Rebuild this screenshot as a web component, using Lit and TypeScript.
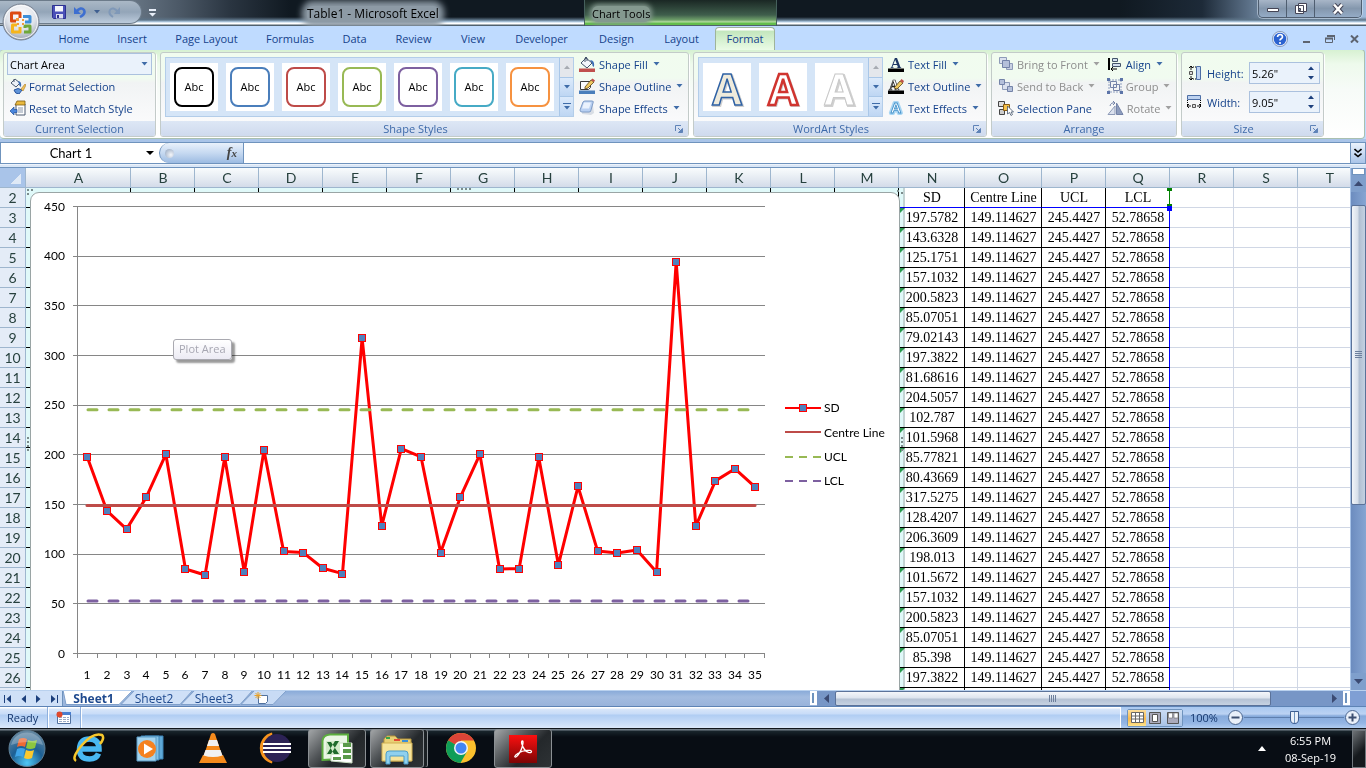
import { LitElement, html, svg, css, nothing } from "lit";
import { customElement } from "lit/decorators.js";
import { classMap } from "lit/directives/class-map.js";

const SD = [
  197.5782, 143.6328, 125.1751, 157.1032, 200.5823, 85.07051, 79.02143, 197.3822, 81.68616,
  204.5057, 102.787, 101.5968, 85.77821, 80.43669, 317.5275, 128.4207, 206.3609, 198.013,
  101.5672, 157.1032, 200.5823, 85.07051, 85.398, 197.3822, 89.3, 168.2, 103.1, 101.2, 104.1,
  82, 394.6, 128.3, 173.8, 185.9, 168.1,
];
const CENTRE = 149.114627;
const UCL = 245.4427;
const LCL = 52.78658;

const baseStyles = css`
  :host { box-sizing: border-box; flex: none; }
  * { box-sizing: border-box; }
  button, input, select {
    font: inherit; color: inherit; margin: 0; padding: 0; border: 0; background: none; outline: 0; border-radius: 0;
  }
  button { cursor: default; white-space: nowrap; }
  svg { display: block; flex: none; }
`;

/* ---------- icons ---------- */
const icon = (w: number, h: number, body: unknown) =>
  html`<svg width=${w} height=${h} viewBox="0 0 ${w} ${h}" aria-hidden="true">${body}</svg>`;

const caret = (c = "#3f6ca8") => icon(7, 4, svg`<path d="M0.5 0h6L3.5 3.6z" fill=${c} />`);

const bucket = svg`
  <path d="M2 7l5-5 6 5-5 5z" fill="#f4f7fb" stroke="#44546a" />
  <path d="M6 6V2q1-2 2 0v3" fill="none" stroke="#44546a" />
  <path d="M11 4q5 0 4 7-2-1-2-4z" fill="#3b6cb4" />`;

const icons = {
  formatSel: icon(16, 16, svg`
    <path d="M1 5l4-4 5 4-4 4z" fill="#eef2f8" stroke="#4c5a70" />
    <path d="M4 4V1" stroke="#4c5a70" /><path d="M8 3q4 0 3 6-2-1-2-3z" fill="#3b6cb4" />
    <path d="M4 12q4-3 8 0l-3 4q-4 0-5-4z" fill="#5f93d8" stroke="#2c569c" />
    <path d="M11 11l4-5 1 1-3 6z" fill="#f0c15a" stroke="#a87820" stroke-width=".6" />`),
  reset: icon(16, 16, svg`
    <path d="M6 4h9v11H6z" fill="#fff" stroke="#4c5a70" />
    <path d="M7 1h8v4H5z" fill="#e9b93e" stroke="#7c5b12" stroke-width=".8" />
    <path d="M8 8h5M8 10h5M8 12h5" stroke="#8a97aa" />
    <path d="M0 11l4-4v2.500h3v3H4V15z" fill="#4a86dc" stroke="#1f4f9c" stroke-width=".7" />`),
  fill: icon(17, 16, svg`${bucket}<path d="M0 12.500h16v3.500H0z" fill="#c0504d" />`),
  outline: icon(17, 16, svg`
    <path d="M1.500 3.500h10v6l-2 2h-8z" fill="#fbfcfe" stroke="#3b3b3b" />
    <path d="M6 9l6-7 3 2-6 6-3 1z" fill="#efc860" stroke="#5b4316" stroke-width=".8" />
    <path d="M12 2l1.500-1.500 2.500 2L15 4z" fill="#c05048" />
    <path d="M0 12.500h16v3.500H0z" fill="#4a7ebb" />`),
  effects: icon(17, 16, svg`
    <path d="M4 5l10 1 1 7-3 2-9-1z" fill="#b9c2cf" opacity=".5" />
    <path d="M4 2q1-1 2-1h7q2 0 1 2l-2 7q0 2-2 2H3q-2 0-2-2z" fill="#b9d0f2" stroke="#7f9cc6" />
    <path d="M5 2.500h7l-2 6H3z" fill="#eaf2fd" />`),
  textFill: icon(17, 16, svg`
    <text x="8" y="12" text-anchor="middle" font-family="Liberation Serif, serif" font-size="15" font-weight="700" fill="#1f3864">A</text>
    <path d="M0 12.500h16v3.500H0z" fill="#000" />`),
  textOutline: icon(17, 16, svg`
    <text x="6" y="12" text-anchor="middle" font-family="Liberation Serif, serif" font-size="14" font-weight="700" fill="#fff" stroke="#222" stroke-width=".7">A</text>
    <path d="M6 10l6-7 3 2-6 6z" fill="#efc860" stroke="#5b4316" stroke-width=".8" />
    <path d="M12 3l1.500-2 2.500 2L15 5z" fill="#c05048" />
    <path d="M0 12.500h16v3.500H0z" fill="#000" />`),
  textEffects: icon(17, 16, svg`
    <text x="8" y="13" text-anchor="middle" font-family="Liberation Sans, sans-serif" font-size="15" font-weight="700" fill="#fff" stroke="#a9d6f3" stroke-width="4" stroke-linejoin="round">A</text>
    <text x="8" y="13" text-anchor="middle" font-family="Liberation Sans, sans-serif" font-size="15" font-weight="700" fill="#fff" stroke="#3f8fc9" stroke-width=".8">A</text>`),
  front: icon(16, 16, svg`
    <path d="M1.500 1.500h7v6h-7z" fill="#dbe1ee" stroke="#8e9bb8" /><path d="M8.500 7.500h6v6h-6z" fill="#c9d1e2" stroke="#8e9bb8" />
    <path d="M4.500 4.500h7v7h-7z" fill="#b5c0da" stroke="#7483a8" />`),
  back: icon(16, 16, svg`
    <path d="M4.500 4.500h7v7h-7z" fill="#dbe1ee" stroke="#8e9bb8" /><path d="M1.500 1.500h5v5h-5z" fill="#b5c0da" stroke="#7483a8" />
    <path d="M9.500 8.500h5v5h-5z" fill="#b5c0da" stroke="#7483a8" />`),
  pane: icon(16, 16, svg`
    <path d="M.5 1.500h6v5h-6z" fill="#ddd" stroke="#444" /><path d="M1.500 9.500h5v5h-5z" fill="#ccc" stroke="#444" />
    <path d="M5.500 4.500h6v6h-6z" fill="#f6c24a" stroke="#8a5a10" />
    <path d="M9.500 6v8l2-1.500 1.500 3 1.500-1-1.500-2.500h2.500z" fill="#fff" stroke="#44546a" stroke-width=".8" />`),
  align: icon(16, 16, svg`
    <path d="M2 2v12" stroke="#000" stroke-width="2" /><path d="M5.500 2.500h5v3h-5zM5.500 7.500h8v3h-8z" fill="#d5e0f0" stroke="#44546a" />
    <path d="M4 13h6M6 11l-2 2 2 2" fill="none" stroke="#000" />`),
  group: icon(16, 16, svg`
    <path d="M2 2h12v12H2z" fill="none" stroke="#8fa0c0" stroke-dasharray="2 1" />
    <path d="M3.500 3.500h6v6h-6zM6.500 6.500h6v6h-6z" fill="none" stroke="#7483a8" />
    <path d="M0 0h3v3H0zM13 0h3v3h-3zM0 13h3v3H0zM13 13h3v3h-3z" fill="#5c74a8" />`),
  rotate: icon(17, 16, svg`
    <path d="M1 14.500h7V6z" fill="#dbe1ee" stroke="#8e9bb8" /><path d="M9.500 3v11.500H16z" fill="#8d9cbd" stroke="#7483a8" />
    <path d="M3 6q1-4 5-3M6 1l2 2-2 2" fill="none" stroke="#7483a8" />`),
  height: icon(15, 16, svg`
    <path d="M9.500 1.500h4v13h-4z" fill="#bdd2f0" stroke="#4c6ea5" /><path d="M4 2h5M4 14h5" stroke="#000" stroke-dasharray="1 1" />
    <path d="M2.500 6.500h3v3h-3z" fill="#ddd" stroke="#555" /><path d="M4 1v4M4 11v4M2 3l2-2 2 2M2 13l2 2 2-2" fill="none" stroke="#000" stroke-width=".9" />`),
  width: icon(15, 16, svg`
    <path d="M.5 1.500h13v4H.5z" fill="#bdd2f0" stroke="#4c6ea5" /><path d="M.5 6v5M13.500 6v5" stroke="#000" stroke-dasharray="1 1" />
    <path d="M5.500 10.500h3v3h-3z" fill="#ddd" stroke="#555" /><path d="M0 12h4M10 12h4M2 10l-2 2 2 2M12 10l2 2-2 2" fill="none" stroke="#000" stroke-width=".9" />`),
  launcher: icon(8, 8, svg`
    <path d="M.5 6V.5H6" fill="none" stroke="#5f83b8" /><path d="M3 3l3 3M7.500 3.500v4h-4z" fill="#5f83b8" stroke="#5f83b8" />`),
  office: icon(38, 38, svg`
    <defs><radialGradient id="orb" cx=".5" cy=".3" r=".75"><stop offset="0" stop-color="#fff" /><stop offset=".55" stop-color="#dfe3ea" /><stop offset="1" stop-color="#8f98a8" /></radialGradient></defs>
    <circle cx="19" cy="19" r="18" fill="url(#orb)" stroke="#76808f" /><circle cx="19" cy="19" r="16.500" fill="none" stroke="#fff" opacity=".8" />
    <g fill="none" stroke-width="3" stroke-linejoin="round">
      <path d="M14 18H9.500V10H18v5" stroke="#dd4b12" /><path d="M21 13.500h7V19h-5" stroke="#3d8fd9" />
      <path d="M15 22h-4.500v7h7.500v-5" stroke="#f6b51c" /><path d="M22 29h6v-6h-5v2" stroke="#6fa83a" /></g>
    <path d="M14 15h3v3h-3zM20 16h2v2h-2zM15 20h2v2h-2zM20 20h2v2h-2z" fill="#f29a3a" />`),
  save: icon(14, 14, svg`
    <path d="M.5.5h13v13h-12l-1-1z" fill="#4a50b8" stroke="#2d3190" /><path d="M3 1h8v5.500H3z" fill="#f3f5fb" />
    <path d="M4 9h7v4.500H4z" fill="#d8dcf0" /><path d="M5 10h2v3H5z" fill="#2d3190" />`),
  undo: icon(14, 12, svg`<path d="M3 6q5-6 8-2 2 4-4 7" fill="none" stroke="#3e6fd0" stroke-width="2.500" /><path d="M1 1v7h7z" fill="#3e6fd0" />`),
  redo: icon(14, 12, svg`<path d="M11 6Q6 0 3 4q-2 4 3 7" fill="none" stroke="#7f98b8" stroke-width="2" /><path d="M13 1v7H7z" fill="#7f98b8" />`),
  help: icon(16, 16, svg`
    <circle cx="8" cy="8" r="7" fill="#2b62d0" stroke="#dfe9fb" stroke-width="1.500" /><circle cx="8" cy="8" r="7.600" fill="none" stroke="#5a6f92" stroke-width=".6" />
    <path d="M5.500 6q.3-2.500 2.600-2.500T10.500 6q0 1-1.300 1.700T8 9.500" fill="none" stroke="#fff" stroke-width="1.600" /><circle cx="8" cy="12" r="1.100" fill="#fff" />`),
};

/* ---------- title bar and tabs ---------- */
@customElement("title-bar")
class TitleBar extends LitElement {
  static styles = [baseStyles, css`
    :host { display: grid; grid-template-columns: 584px 193px 1fr auto; height: 26px; position: relative;
      background:
        linear-gradient(to bottom, transparent 0 17px, #5d7488 20px, #b8d2ea 22px, #fff 23px, #fff 24px, #50616f 25px),
        linear-gradient(to right, #8b9bab 0, #7a8998 100px, #4b5866 180px, #2a3541 230px, #101921 290px, #101921 82%, #1d2a38 88%, #8ba6c4 94%, #9fbbdc 100%); }
    .title { display: flex; position: relative; }
    .qat { display: flex; align-items: center; gap: 7px; width: 142px; height: 24px; padding: 0 12px 0 52px;
      border: 1px solid #6c7b8a; border-left: 0; border-radius: 0 12px 12px 0; background: linear-gradient(#aab8c6, #93a5b8 50%, #bccbdc); }
    .qat button { display: grid; place-items: center; }
    .more { margin-left: 7px; }
    .name, .ctx span { height: 16px; line-height: 16px; white-space: nowrap; border-radius: 6px; }
    .name { margin: 6px 0 0 151px; font-size: 12px; color: #000; background: #8d9aa5; box-shadow: 0 0 6px 5px #8d9aa5; }
    .ctx { display: flex; align-items: flex-start; border: solid #45605c; border-width: 0 1px; background: linear-gradient(#1a2724, #3f5e4c 15px, #6fa06a 20px, #b8e0a4 22px, #63bd4c 23px, #63bd4c 25px, #50616f 25px);
      padding: 6px 0 0 7px; }
    .ctx span { font-size: 11px; background: #84998f; box-shadow: 0 0 5px 2px #84998f; }
    .win { grid-column: 4; display: flex; height: 18px; margin-right: 4px; border: 1px solid #4f5e70; border-top: 0; border-radius: 0 0 5px 5px; overflow: hidden;
      box-shadow: 0 0 0 1px rgba(220,232,246,.5); }
    .win button { width: 28px; display: grid; place-items: center; background: linear-gradient(#a8b6c8, #8497ad 50%, #94abc6); border-right: 1px solid #4f5e70; }
    .win .close { width: 46px; border-right: 0; }
  `];
  render() {
    const glyph = (b: unknown) => icon(14, 12, b);
    return html`
      <div class="title">
        <div class="qat">
          <button aria-label="Save">${icons.save}</button>
          <button aria-label="Undo">${icons.undo}</button>
          <button aria-label="Undo list">${icon(6, 4, svg`<path d="M0 0h6L3 3.500z" fill="#3f5f90" />`)}</button>
          <button aria-label="Redo">${icons.redo}</button>
        </div>
        <button class="more" aria-label="Customize toolbar">${icon(7, 8, svg`<path d="M0 0h7v2H0zM0 4h7L3.500 7.500z" fill="#e8eef8" />`)}</button>
        <span class="name">Table1 - Microsoft Excel</span>
      </div>
      <div class="ctx"><span>Chart Tools</span></div>
      <div class="win">
        <button aria-label="Minimize">${glyph(svg`<path d="M1.500 5.500h11v3h-11z" fill="#fff" stroke="#445" />`)}</button>
        <button aria-label="Restore">${glyph(svg`<path d="M4.500.500h8v8h-8zM1.500 2.500h8v8h-8z" fill="#fff" stroke="#445" /><path d="M4.500 5.500h2v2h-2z" fill="#8497ad" stroke="#445" />`)}</button>
        <button class="close" aria-label="Close">${glyph(svg`<path d="M3 1.500l8 9M11 1.500l-8 9" stroke="#445" stroke-width="4.500" /><path d="M3 1.500l8 9M11 1.500l-8 9" stroke="#fff" stroke-width="2.500" />`)}</button>
      </div>`;
  }
}

@customElement("ribbon-tabs")
class RibbonTabs extends LitElement {
  static styles = [baseStyles, css`
    :host { display: grid; grid-template-columns: 58px 58px 91px 76px 53px 65px 54px 83px 67px 63px 64px 1fr auto; height: 24px; padding: 1px 0 0 45px;
      background: #bfdbff; color: #15428b; font-size: 11px; position: relative; z-index: 1; margin-bottom: -1px; }
    .orb { position: absolute; left: 2px; top: -23px; }
    .tab { grid-row: 1; line-height: 24px; text-align: center; }
    .on { height: 23px; margin: 0 2px; line-height: 22px; border: 1px solid #9fb49a; border-bottom: 0; border-radius: 4px 4px 0 0;
      background: linear-gradient(#fff 0 2px, #c3e6bd 3px, #d8f2d3 60%, #eafbe6); }
    .end { grid-row: 1; grid-column: -2; display: flex; align-items: center; gap: 12px; padding-right: 6px; }
    .end button { width: 12px; display: grid; place-items: center; }
    .end .help { width: 16px; }
  `];
  render() {
    const tabs = ["Home", "Insert", "Page Layout", "Formulas", "Data", "Review", "View", "Developer", "Design", "Layout", "Format"];
    return html`
      <button class="orb" aria-label="Office menu">${icons.office}</button>
      ${tabs.map((t) => html`<button class=${classMap({ tab: true, on: t === "Format" })}>${t}</button>`)}
      <div class="end">
        <button class="help" aria-label="Help">${icons.help}</button>
        <button aria-label="Minimize workbook">${icon(8, 8, svg`<path d="M1 6h7v2H1z" fill="#5d6470" />`)}</button>
        <button aria-label="Restore workbook">${icon(10, 8, svg`<path d="M2.500 1h7v4M.500 3.500h7v4h-7z" fill="none" stroke="#5d6470" /><path d="M2 0h8v2H2zM0 2.500h8v2H0z" fill="#5d6470" />`)}</button>
        <button aria-label="Close workbook">${icon(9, 8, svg`<path d="M1 .5l7 7M8 .5l-7 7" stroke="#5d6470" stroke-width="2" />`)}</button>
      </div>`;
  }
}

/* ---------- ribbon ---------- */
@customElement("format-ribbon")
class FormatRibbon extends LitElement {
  static styles = [baseStyles, css`
    :host { display: flex; gap: 4px; height: 90px; padding: 2px 3px; border: 1px solid #a9c0b0; border-left: 0; border-radius: 4px; margin-right: 1px;
      background: linear-gradient(#d7f1d2, #eefaec 14px, #f7fbf8 40px, #fff); font-size: 11px; color: #15428b; }
    .group { display: flex; flex-direction: column; height: 85px; border: 1px solid #c3cbc9; border-radius: 3px; overflow: hidden;
      background: linear-gradient(#f1fcef, #f1fbf0 25px, #f1f3f4 30px, #fdfdfe); box-shadow: 1px 1px 0 #fff; }
    .body { flex: 1; display: flex; min-height: 0; }
    .cap { display: flex; height: 15px; line-height: 15px; color: #3e6aaa; background: linear-gradient(#dde7f5, #cfdaee); }
    .cap span { flex: 1; text-align: center; }
    .launch { width: 18px; display: grid; place-items: center; }
    .selection { width: 153px; }
    .shapes { width: 529px; }
    .wordart { width: 294px; }
    .arrange { width: 186px; }
    .size { width: 143px; }
    .rows { display: flex; flex-direction: column; }
    .cmd { display: flex; align-items: center; gap: 3px; height: 22px; color: #15428b; }
    .cmd svg + .txt { margin-right: 2px; }
    .off { color: #8d8d8d; }
    .selection .rows { padding: 0 3px; width: 100%; }
    .selection .cmd { padding-left: 3px; }
    .pick { appearance: none; height: 22px; width: 145px; padding-left: 2px; border: 1px solid #abc1de; color: #000; background: #eaf2fb; }
    .pickbox { position: relative; display: flex; }
    .pickbox svg { position: absolute; right: 4px; top: 9px; }
    .gallery { display: flex; height: 60px; margin: 4px 5px 0 4px; border: 1px solid #b3cde9; background: #d5e5f7; }
    .tiles { display: flex; gap: 8px; padding: 5px 4px; }
    .tile { width: 48px; height: 48px; background: #fff; display: grid; place-items: center; color: #000; font-size: 11px; }
    .tile svg { overflow: visible; }
    .tile span { width: 40px; height: 40px; line-height: 36px; border: 2px solid #000; border-radius: 8px; text-align: center; }
    .tile .k1 { border-color: #4a7ebb; } .tile .k2 { border-color: #be4b48; } .tile .k3 { border-color: #98b954; }
    .tile .k4 { border-color: #7d60a0; } .tile .k5 { border-color: #46aac5; } .tile .k6 { border-color: #f69240; }
    .scroll { display: flex; flex-direction: column; width: 14px; margin-left: 1px; border-left: 1px solid #a9c7e8; }
    .scroll button { flex: 1; display: grid; place-items: center; background: linear-gradient(#dceafb, #bed6f3); border-bottom: 1px solid #a9c7e8; }
    .scroll button:first-child { background: #e4e7ec; }
    .scroll button:last-child { border: 0; }
    .arrange .body { padding-left: 6px; gap: 7px; }
    .size .body { flex-direction: column; gap: 7px; padding: 9px 3px 0 5px; }
    .field { display: flex; align-items: center; height: 22px; }
    .field label { margin-left: 5px; width: 41px; }
    .spin { display: flex; flex: 1; border: 1px solid #abc1de; background: #eaf2fb; height: 22px; margin-left: 1px; }
    .spin input { width: 50px; padding-left: 2px; color: #000; }
    .spin div { display: flex; flex-direction: column; margin-left: auto; width: 17px; }
    .spin button { flex: 1; display: grid; place-items: center; }
  `];
  cmd(ic: unknown, text: string, arrow = false, off = false) {
    return html`<button class=${classMap({ cmd: true, off })}>${ic}<span class="txt">${text}</span>${arrow ? caret(off ? "#a0a0a0" : "#3f6ca8") : nothing}</button>`;
  }
  scroller() {
    return html`<div class="scroll">
      <button aria-label="Previous row">${icon(6, 4, svg`<path d="M0 4h6L3 .5z" fill="#a7abb2" />`)}</button>
      <button aria-label="Next row">${icon(6, 4, svg`<path d="M0 0h6L3 3.500z" fill="#3f6ca8" />`)}</button>
      <button aria-label="More styles">${icon(8, 8, svg`<path d="M0 0h8v1H0zM1 3h6L4 6.500z" fill="#3f6ca8" />`)}</button>
    </div>`;
  }
  letter(kind: number) {
    const fills = ["#efebdc", "#fff", "#fff"], strokes = ["#2f62a5", "#d0342f", "#c8c8c8"], ws = [1.5, 2.5, 1];
    return html`<button class="tile" aria-label="Text style ${kind + 1}"><svg width="48" height="48" viewBox="0 0 48 48">
      <g font-family="Open Sans, sans-serif" font-size="43" font-weight="700" text-anchor="middle">
        <text x="25" y="43" fill="#999" opacity=".55" stroke="#aaa" stroke-width="2">A</text>
        <text x="24" y="42" fill=${fills[kind]} stroke=${strokes[kind]} stroke-width=${ws[kind]}>A</text></g></svg></button>`;
  }
  render() {
    const launch = html`<button class="launch" aria-label="More options">${icons.launcher}</button>`;
    const cap = (text: string, more: boolean) => html`<div class="cap"><span>${text}</span>${more ? launch : nothing}</div>`;
    const field = (id: string, label: string, value: string, ic: unknown) => html`<div class="field">${ic}<label for=${id}>${label}</label>
      <span class="spin"><input id=${id} .value=${value} /><div>
        <button aria-label="Increase">${icon(6, 4, svg`<path d="M0 4h6L3 .5z" fill="#1c3f7c" />`)}</button>
        <button aria-label="Decrease">${icon(6, 4, svg`<path d="M0 0h6L3 3.500z" fill="#1c3f7c" />`)}</button></div></span></div>`;
    return html`
      <section class="group selection"><div class="body"><div class="rows">
        <div class="pickbox"><select class="pick" aria-label="Chart element"><option>Chart Area</option></select>${caret()}</div>
        ${this.cmd(icons.formatSel, "Format Selection")}${this.cmd(icons.reset, "Reset to Match Style")}
      </div></div>${cap("Current Selection", false)}</section>
      <section class="group shapes"><div class="body">
        <div class="gallery"><div class="tiles">${[0, 1, 2, 3, 4, 5, 6].map((k) => html`<button class="tile"><span class="k${k}">Abc</span></button>`)}</div>${this.scroller()}</div>
        <div class="rows">${this.cmd(icons.fill, "Shape Fill", true)}${this.cmd(icons.outline, "Shape Outline", true)}${this.cmd(icons.effects, "Shape Effects", true)}</div>
      </div>${cap("Shape Styles", true)}</section>
      <section class="group wordart"><div class="body">
        <div class="gallery"><div class="tiles">${[0, 1, 2].map((k) => this.letter(k))}</div>${this.scroller()}</div>
        <div class="rows">${this.cmd(icons.textFill, "Text Fill", true)}${this.cmd(icons.textOutline, "Text Outline", true)}${this.cmd(icons.textEffects, "Text Effects", true)}</div>
      </div>${cap("WordArt Styles", true)}</section>
      <section class="group arrange"><div class="body">
        <div class="rows">${this.cmd(icons.front, "Bring to Front", true, true)}${this.cmd(icons.back, "Send to Back", true, true)}${this.cmd(icons.pane, "Selection Pane")}</div>
        <div class="rows">${this.cmd(icons.align, "Align", true)}${this.cmd(icons.group, "Group", true, true)}${this.cmd(icons.rotate, "Rotate", true, true)}</div>
      </div>${cap("Arrange", false)}</section>
      <section class="group size"><div class="body">
        ${field("h", "Height:", '5.26"', icons.height)}${field("w", "Width:", '9.05"', icons.width)}
      </div>${cap("Size", true)}</section>`;
  }
}

/* ---------- formula bar ---------- */
@customElement("formula-bar")
class FormulaBar extends LitElement {
  static styles = [baseStyles, css`
    :host { display: flex; height: 29px; padding: 3px 0 4px; background: linear-gradient(#a9c4e8 0 3px, #fff 3px 25px, #d9e6f6 26px); font: 13px "Lato", sans-serif; }
    .bar { display: flex; flex: 1; border: 1px solid #6f93bd; background: #fff; height: 22px; }
    .name { width: 140px; text-align: center; color: #000; }
    .drop { width: 18px; display: grid; place-items: center; }
    .fx { display: flex; align-items: center; justify-content: space-between; width: 85px; padding: 0 6px 0 5px; border: solid #6f93bd; border-width: 0 1px;
      border-radius: 11px 0 0 11px; background: linear-gradient(#e9f1fb, #c6d9f1 50%, #9cbbe2); }
    .knob { width: 9px; height: 9px; border-radius: 5px; background: radial-gradient(circle at 65% 65%, #f4f6fa, #8fa2bd); }
    .fn { font: italic 700 14px "Liberation Serif", serif; color: #444; line-height: 16px; }
    .fn small { font-size: 11px; }
    .text { flex: 1; min-width: 0; padding: 0 4px; }
    .expand { width: 15px; display: grid; place-items: center; border-left: 1px solid #6f93bd; background: linear-gradient(#eaf2fc, #a9c4e8); }
  `];
  render() {
    return html`<div class="bar">
      <input class="name" aria-label="Name box" .value=${"Chart 1"} />
      <button class="drop" aria-label="Names">${icon(8, 4, svg`<path d="M0 0h8L4 4z" fill="#000" />`)}</button>
      <div class="fx"><span class="knob"></span><button class="fn" aria-label="Insert function">f<small>x</small></button></div>
      <input class="text" aria-label="Formula" />
      <button class="expand" aria-label="Expand formula bar">${icon(8, 10, svg`<path d="M.5 1L4 4 7.500 1M.5 5.500L4 8.500l3.500-3" fill="none" stroke="#000" stroke-width="1.600" />`)}</button>
    </div>`;
  }
}

/* ---------- chart ---------- */
@customElement("sd-chart")
class SdChart extends LitElement {
  static styles = [baseStyles, css`
    :host { display: block; position: absolute; left: 26px; top: 20px; padding: 4px 5px 0 4px; width: 879px; height: 520px; }
    .veil { position: absolute; inset: 0; background: #e0f9f9; border-right: 2px solid #c3d3d3; mix-blend-mode: multiply; }
    .area { position: relative; height: 516px; border: 1px solid #9aa5a5; border-radius: 9px 9px 0 0; background: #fff; font-family: "Lato", sans-serif; }
    .area svg { overflow: visible; }
    .tip { position: absolute; left: 142px; top: 146px; height: 21px; padding: 0 5px; font: 11px/18px "Open Sans", sans-serif; color: #a7a7b2;
      border: 1px solid #a9a9b0; border-radius: 3px; background: linear-gradient(#fff, #ecebf4); box-shadow: 3px 3px 2px rgba(0,0,0,.4); white-space: nowrap; }
  `];
  render() {
    const x0 = 77.5, x1 = 764.5, step = (x1 - x0) / 35;
    const y = (v: number) => 653.5 - v * (447 / 450);
    const x = (i: number) => x0 + step * (i + 0.5);
    const ticks = [0, 50, 100, 150, 200, 250, 300, 350, 400, 450];
    const snap = (v: number) => Math.floor(v) + 0.5;
    const mark = (cx: number, cy: number) => svg`<rect x=${Math.round(cx) - 3.5} y=${Math.round(cy) - 3.5} width="7" height="7" fill="#4f81bd" stroke="#f00" />`;
    const dots = (pts: number[][]) => pts.map(([a, b]) => svg`<rect x=${a} y=${b} width="2" height="2" fill="#7c8c8c" />`);
    return html`<div class="veil"></div><div class="area">
      <svg width="868" height="497" viewBox="31 193 868 497" role="img" aria-label="Line chart of SD with control limits">
        <g stroke="#868686" shape-rendering="crispEdges">
          ${ticks.map((t) => svg`<line x1="73" x2="765" y1=${snap(y(t))} y2=${snap(y(t))} />`)}
          <line x1=${x0} x2=${x0} y1="206" y2="658" />
          ${SD.map((_, i) => svg`<line x1=${snap(x0 + step * (i + 1))} x2=${snap(x0 + step * (i + 1))} y1="654" y2="658" />`)}
        </g>
        <g font-size="12" fill="#000">
          ${ticks.map((t) => svg`<text x="65" y=${Math.round(y(t)) + 4} text-anchor="end">${t}</text>`)}
          ${SD.map((_, i) => svg`<text x=${Math.round(x(i))} y="679" text-anchor="middle">${i + 1}</text>`)}
          <text x="824" y="412">SD</text><text x="824" y="437">Centre Line</text><text x="824" y="461">UCL</text><text x="824" y="485">LCL</text>
        </g>
        <polyline points=${SD.map((v, i) => `${x(i)},${y(v)}`).join(" ")} fill="none" stroke="#f00" stroke-width="3" stroke-linejoin="round" />
        ${SD.map((v, i) => mark(x(i), y(v)))}
        <g stroke-width="3" stroke-linecap="round">
          <line x1="87" x2="755" y1=${y(CENTRE)} y2=${y(CENTRE)} stroke="#be4b48" />
          <line x1="88" x2="749" y1=${y(UCL)} y2=${y(UCL)} stroke="#98b954" stroke-dasharray="9 12" />
          <line x1="88" x2="749" y1=${y(LCL)} y2=${y(LCL)} stroke="#7d60a0" stroke-dasharray="9 12" />
        </g>
        <line x1="785" x2="821" y1="408" y2="408" stroke="#f00" stroke-width="2" />${mark(803, 408)}
        <line x1="785" x2="821" y1="432" y2="432" stroke="#be4b48" stroke-width="2" />
        <line x1="785" x2="821" y1="457" y2="457" stroke="#98b954" stroke-width="2" stroke-dasharray="8 6" />
        <line x1="785" x2="821" y1="481" y2="481" stroke="#7d60a0" stroke-width="2" stroke-dasharray="8 6" />
        ${dots([[27, 189], [31, 189], [27, 193], [457, 188], [461, 188], [465, 188], [469, 188], [901, 437], [901, 441], [901, 445], [901, 449], [897, 190], [901, 192], [27, 437], [27, 441], [27, 445], [27, 449]])}
      </svg>
      <span class="tip" role="tooltip">Plot Area</span>
    </div>`;
  }
}

/* ---------- sheet ---------- */
@customElement("work-sheet")
class WorkSheet extends LitElement {
  static styles = [baseStyles, css`
    :host { display: flex; flex: 1; min-height: 0; }
    .grid { position: relative; flex: 1; min-width: 0; overflow: hidden; background: #fff; border-top: 1px solid #6f93bd; margin-top: -1px; }
    table { table-layout: fixed; width: 1362px; border-collapse: separate; border-spacing: 0; }
    .c-row { width: 26px; } .c-a { width: 105px; } .c-n { width: 66px; } .c-o { width: 77px; } .c-std { width: 64px; }
    tr { height: 20px; }
    th, td { padding: 0; height: 20px; border: solid #9eb6ce; border-width: 0 1px 1px 0; overflow: hidden; white-space: nowrap; text-align: center; }
    th { font: 14px/17px "Lato", sans-serif; color: #27413e; background: #e4ecf7; }
    thead th { padding-left: 1px; background: linear-gradient(#f9fcfd, #e3e9f1 60%, #d3dbe9); }
    thead .corner { background: linear-gradient(135deg, transparent 50%, #dfe9f6 50%) no-repeat 10px 5px / 11px 11px, #a9c4e9; }
    td { padding: 1px 0 0 1px; font: 14px/18px "Liberation Serif", serif; color: #000; border-color: #d0d7e5; position: relative; }
    .ink { border-color: #000; }
    .flag::before { content: ""; position: absolute; left: 1px; top: 0; border: solid transparent; border-width: 0 5px 5px 0; border-top: 5px solid #2e9e4f; border-bottom: 0; }
    .under { border-bottom-color: #00f; }
    .edge { border-right-color: #00f; }
    .last { border-right-color: #008000; overflow: visible; }
    .last svg { position: absolute; right: -3px; top: 0; z-index: 1; }
    .bar { width: 16px; display: flex; flex-direction: column; background: #7f9fcc; border-left: 1px solid #a9c4e8; }
    .split { height: 7px; margin: 0 1px; background: #fff; border: 1px solid #6f93bd; }
    .up, .down { height: 17px; display: grid; place-items: center; }
    .track { flex: 1; display: flex; flex-direction: column; padding-top: 13px; background: linear-gradient(90deg, #6c8cbf, #86a5d2); }
    .thumb { display: grid; place-items: center; height: 64%; border: 1px solid #5b7299; border-radius: 2px; background: linear-gradient(90deg, #f2f5f9, #d6dee9 45%, #b1bfd2 55%, #c3d1e2); }
  `];
  render() {
    const cols = "ABCDEFGHIJKLMNOPQRST".split("");
    const rows = Array.from({ length: 26 }, (_, i) => i + 2);
    const value = (col: string, row: number) => {
      if (row === 2) return ({ N: "SD", O: "Centre Line", P: "UCL", Q: "LCL" } as Record<string, string>)[col] ?? "";
      if (row > 26) return "";
      return ({ N: SD[row - 3], O: CENTRE, P: UCL, Q: LCL } as Record<string, number>)[col] ?? "";
    };
    return html`
      <div class="grid">
        <table>
          <colgroup><col class="c-row" /><col class="c-a" />${cols.slice(1).map((c) => html`<col class=${c === "N" ? "c-n" : c === "O" ? "c-o" : "c-std"} />`)}</colgroup>
          <thead><tr><th class="corner"></th>${cols.map((c) => html`<th scope="col">${c}</th>`)}</tr></thead>
          <tbody>${rows.map((r) => html`<tr><th scope="row">${r < 27 ? r : ""}</th>${cols.map((c) => html`<td class=${classMap({
            ink: c <= "Q", flag: c === "N" && r > 2, under: r === 2 && c >= "N" && c <= "Q", edge: r > 2 && c === "Q", last: r === 2 && c === "Q",
          })}>${value(c, r)}${r === 2 && c === "Q" ? html`<svg width="5" height="23" viewBox="0 0 5 23"><path d="M0 0h5v3H0zM0 16h5v3H0z" fill="#008000" /><path d="M0 18h5v5H0z" fill="#00f" /></svg>` : nothing}</td>`)}</tr>`)}</tbody>
        </table>
        <sd-chart></sd-chart>
      </div>
      <div class="bar">
        <div class="split"></div>
        <button class="up" aria-label="Scroll up">${icon(9, 5, svg`<path d="M0 5h9L4.500 0z" fill="#3b4a72" />`)}</button>
        <div class="track"><div class="thumb">${icon(7, 7, svg`<path d="M0 .5h7M0 2.500h7M0 4.500h7M0 6.500h7" stroke="#6d7f9c" />`)}</div></div>
        <button class="down" aria-label="Scroll down">${icon(9, 5, svg`<path d="M0 0h9L4.500 5z" fill="#3b4a72" />`)}</button>
      </div>`;
  }
}

@customElement("sheet-tabs")
class SheetTabs extends LitElement {
  static styles = [baseStyles, css`
    :host { display: flex; height: 17px; background: linear-gradient(#8aabd9, #a3bce0 6px, #98b3db); border-top: 1px solid #b9d1ee; border-bottom: 1px solid #5d83b5; font-size: 12px; color: #1f4a8f; overflow: hidden; }
    .nav { display: flex; width: 63px; border-right: 1px solid #6f93bd; background: #cfe0f7; }
    .nav button { flex: 1; display: grid; place-items: center; }
    .tabs { position: relative; display: flex; width: 222px; }
    .tabs > svg { position: absolute; inset: 0; }
    .tabs button { position: relative; width: 60px; line-height: 15px; text-align: center; }
    .tabs .on { width: 61px; font-weight: 700; }
    .tabs .new { width: 34px; display: grid; place-items: center; }
    .h { display: flex; width: 40.7%; margin-left: auto; }
    .grip { width: 7px; margin: 0 0 1px; border: 2px solid #fff; background: #6f93bd; border-right-width: 3px; }
    .arrow { width: 18px; display: grid; place-items: center; background: #7796c6; }
    .track { flex: 1; display: flex; background: #7796c6; }
    .thumb { width: 89%; display: grid; place-items: center; border: 1px solid #5b7299; border-radius: 2px; background: linear-gradient(#f4f6fa, #dde4ee 45%, #b5c2d4 55%, #c6d2e2); }
    .fillr { width: 16px; background: #7f9fd4; }
  `];
  render() {
    const nav = [
      svg`<path d="M1 0h1v8H1zM8 0v8L3.500 4z" />`, svg`<path d="M7 0v8L2.500 4z" />`, svg`<path d="M2 0v8L6.500 4z" />`, svg`<path d="M7 0h1v8H7zM1 0v8L5.500 4z" />`,
    ];
    const names = ["First sheet", "Previous sheet", "Next sheet", "Last sheet"];
    return html`
      <div class="nav">${nav.map((n, i) => html`<button aria-label=${names[i]}>${icon(9, 8, svg`<g fill="#1c3f7c">${n}</g>`)}</button>`)}</div>
      <div class="tabs">
        <svg width="226" height="16" viewBox="0 0 226 16">
          <path d="M178 13.500L192 -1H224L210 13.500z" fill="#c8dbf5" stroke="#7f9fca" />
          <path d="M118 13.500L132 -1H190L177 13.500z" fill="#cfe0f7" stroke="#7f9fca" />
          <path d="M58 13.500L72 -1H130L117 13.500z" fill="#cfe0f7" stroke="#7f9fca" />
          <path d="M0 -1H70L56 13.500H3z" fill="#fff" stroke="#7f9fca" />
        </svg>
        <button class="on">Sheet1</button><button>Sheet2</button><button>Sheet3</button>
        <button class="new" aria-label="Insert worksheet">${icon(15, 13, svg`<path d="M4.500 3.500h9v6l-2 2h-7z" fill="#fff" stroke="#51719f" /><path d="M4 0v7M.5 3.500h7M1.500 1l5 5M6.500 1l-5 5" stroke="#e9a227" />`)}</button>
      </div>
      <div class="h"><span class="grip"></span>
        <button class="arrow" aria-label="Scroll left">${icon(5, 9, svg`<path d="M5 0v9L0 4.500z" fill="#3b4a72" />`)}</button>
        <div class="track"><div class="thumb">${icon(8, 7, svg`<path d="M.5 0v7M2.500 0v7M4.500 0v7M6.500 0v7" stroke="#6d7f9c" />`)}</div></div>
        <button class="arrow" aria-label="Scroll right">${icon(5, 9, svg`<path d="M0 0v9l5-4.500z" fill="#3b4a72" />`)}</button>
        <span class="grip"></span><span class="fillr"></span></div>`;
  }
}

@customElement("status-bar")
class StatusBar extends LitElement {
  static styles = [baseStyles, css`
    :host { display: flex; height: 21px; background: linear-gradient(#fff 0 1px, #d8e6f9 2px, #c8dcf8 7px, #b0cdf3 8px, #cfe1f9 18px, #dce9fb); font-size: 11px; color: #15376e; }
    .cell { display: flex; align-items: center; padding: 0 8px; border-right: 1px solid #8fb0dd; box-shadow: 1px 0 #fff; }
    .ready { width: 48px; padding: 0 7px; } .macro { width: 33px; }
    .right { margin-left: auto; display: flex; align-items: center; width: 246px; padding: 0 5px 0 6px; border-left: 1px solid #fff;
      background: linear-gradient(#a9c8f0, #bcd3f3 7px, #86aadb 9px, #93b5e4 16px, #b0ccf0); }
    .views { display: flex; height: 18px; border: 1px solid #6f93bd; border-radius: 2px; }
    .views button { width: 18px; display: grid; place-items: center; background: linear-gradient(#cbdcf3, #a9c3e6); }
    .views .on { background: linear-gradient(#fbdf9e, #f9b84a 55%, #fde48e); }
    .pct { margin-left: 7px; width: 37px; text-align: left; }
    .zoom { appearance: none; flex: 1; min-width: 0; height: 18px; background: linear-gradient(#5e7fae, #5e7fae) no-repeat center / 100% 1px; }
    .zoom::-webkit-slider-thumb { appearance: none; width: 9px; height: 13px; border: 1px solid #3f5f92; background: linear-gradient(90deg, #e9f0fa 45%, #6f93bd 45% 55%, #e9f0fa 55%); border-radius: 1px 1px 5px 5px; }
  `];
  render() {
    const round = (plus: boolean) => icon(17, 17, svg`<circle cx="8.500" cy="8.500" r="7" fill="#e8eff9" stroke="#4a6690" /><path d=${plus ? "M4.500 8.500h8M8.500 4.500v8" : "M4.500 8.500h8"} stroke="#3c4f70" stroke-width="2" />`);
    return html`
      <div class="cell ready">Ready</div>
      <div class="cell macro"><button aria-label="Record macro">${icon(16, 14, svg`<path d="M1.500 1.500h13v11h-13z" fill="#fff" stroke="#51719f" /><path d="M1 1h14v3H1z" fill="#4a7fd0" /><path d="M3 6.500h10M3 8.500h10M3 10.500h10" stroke="#9aabc6" stroke-dasharray="3 1" /><circle cx="3.500" cy="3.500" r="3" fill="#e0482c" />`)}</button></div>
      <div class="right">
        <div class="views">
          <button class="on" aria-label="Normal view">${icon(13, 11, svg`<path d="M.5.5h12v10H.5zM.5 4h12M.5 7h12M4.500.5v10M8.500.5v10" fill="#fff" stroke="#666" />`)}</button>
          <button aria-label="Page layout">${icon(12, 12, svg`<path d="M.5.5h11v11H.5z" fill="#aab" stroke="#555" /><path d="M3.500 2.500h5v7h-5z" fill="#fff" stroke="#555" />`)}</button>
          <button aria-label="Page break preview">${icon(12, 12, svg`<path d="M.5.5h11v11H.5z" fill="#aab" stroke="#555" /><path d="M1.500 1h4v5h-4zM7 1h4v5H7z" fill="#fff" stroke="#666" stroke-width=".6" />`)}</button>
        </div>
        <span class="pct">100%</span>
        <button aria-label="Zoom out">${round(false)}</button>
        <input class="zoom" type="range" min="0" max="200" value="100" aria-label="Zoom" />
        <button aria-label="Zoom in">${round(true)}</button>
      </div>`;
  }
}

/* ---------- taskbar ---------- */
@customElement("task-bar")
class TaskBar extends LitElement {
  static styles = [baseStyles, css`
    :host { display: flex; height: 40px; background: linear-gradient(#10161c 0 1px, #75808a 1px 2px, #19252c 3px, #080d14 9px); color: #fff; font-size: 12px; }
    .start { width: 58px; padding: 2px 8px 0; display: grid; }
    .app { width: 62px; display: grid; place-items: center; }
    .open { width: 58px; margin: 1px 2px 0; border: 1px solid #8b9094; border-radius: 3px; background: linear-gradient(135deg, #a2a5a7, #54585b 35%, #24282b 60%, #2e3235); }
    .many { width: 54px; margin-right: 6px; box-shadow: 4px 0 0 -1px #1b2024, 5px 0 0 -1px #8b9094; }
    .tray { margin-left: auto; display: flex; align-items: center; }
    .clock { width: 83px; margin-left: 3px; font-size: 11px; line-height: 17px; text-align: center; padding-top: 1px; }
    .desk { width: 14px; height: 38px; margin-top: 1px; border: 1px solid #70777d; background: linear-gradient(135deg, #6d7276, #15191d 60%); }
  `];
  render() {
    const excel = icon(32, 32, svg`
      <path d="M1.500 27V8Q2 2 9 1.500h18v24z" fill="#e9f5e4" stroke="#5cae3e" stroke-width="2" />
      <path d="M10 10h21v20l-21-2z" fill="#fff" stroke="#c9dcc2" /><path d="M22 10h8v4h-8zM22 16h8v4h-8zM22 22h8v4h-8zM12 24h8v3h-8z" fill="#5a9a4a" />
      <path d="M5 8h14v14H5z" fill="#d2ebc9" /><path d="M6 9h4l8 12h-5zM18 8h-4L6 21h4z" fill="#1f6b2b" />`);
    const folder = icon(34, 32, svg`
      <path d="M4 6l3-3h8l3 3h13v22H4z" fill="#e9cf74" stroke="#b6953a" /><path d="M6 4h4v2H6z" fill="#36a34b" /><path d="M14 6h6v2h-6z" fill="#e34b34" /><path d="M22 7h6v2h-6z" fill="#3b8fd8" />
      <path d="M2 10h30v18H2z" fill="#f6e49b" stroke="#cfae52" /><path d="M6 21q0-3 3-3h16q3 0 3 3v10h-4v-8H10v8H6z" fill="#8fd0ee" stroke="#4a9cc8" />`);
    const chrome = icon(32, 32, svg`
      <circle cx="16" cy="16" r="15" fill="#fbc02d" /><path d="M16 16L3 8.500A15 15 0 0 1 29 8.500H16z" fill="#dc4437" />
      <path d="M3 8.500A15 15 0 0 0 15.500 31L22 19.500 16 16z" fill="#0f9d58" /><path d="M3 8.500L9.500 19.500 16 16z" fill="#0f9d58" />
      <circle cx="16" cy="16" r="7" fill="#f2f4f5" /><circle cx="16" cy="16" r="5.500" fill="#4285f4" />`);
    const adobe = icon(28, 28, svg`
      <defs><linearGradient id="ad" x2="0" y2="1"><stop stop-color="#fb1010" /><stop offset="1" stop-color="#7d0505" /></linearGradient></defs>
      <path d="M0 0h28v28H0z" fill="url(#ad)" /><path d="M13.500 6c-2 0-.5 5 2 8.500s7 4 7 2-8-1.500-13 1.500-4 4.500-2.500 4 5-6 6-9.500 1.500-6.500.5-6.500z" fill="none" stroke="#fff" stroke-width="1.300" />`);
    const ie = icon(34, 32, svg`
      <path d="M8 17h19q0-10-9.500-10T7.500 17t10 10q7 0 9-5.500" fill="none" stroke="#49b8f2" stroke-width="5.500" />
      <path d="M4 29Q-1 26 10 13T30 3q3 3-2 9" fill="none" stroke="#f6c72c" stroke-width="2.500" />`);
    const media = icon(32, 30, svg`
      <path d="M10 3h18v23H10z" fill="#5fa9d8" stroke="#3c82b4" /><path d="M6 3h18v24H6z" fill="#84c2e6" stroke="#3c82b4" /><path d="M2 4h19v24H2z" fill="#a3d3ee" stroke="#5a9cc6" />
      <circle cx="12" cy="16" r="9" fill="#f58220" /><path d="M9 10.500v11l9-5.500z" fill="#fff" />`);
    const vlc = icon(30, 32, svg`
      <path d="M5 23h20l4 8H1z" fill="#f58a1c" /><path d="M13 2q2-2 4 0l8 24q-10 5-20 0z" fill="#f58a1c" />
      <path d="M11 8h8l2 6H9zM7.500 18h15l2 5.500q-9.500 3-19 0z" fill="#f1f1f1" />`);
    const eclipse = icon(34, 32, svg`
      <path d="M14 1.500A15 15 0 0 0 14 30.500 A18 18 0 0 1 14 1.500z" fill="#f7941e" stroke="#f7941e" stroke-width="2" /><circle cx="19" cy="16" r="14" fill="#2c2255" />
      <path d="M5 12h28M5 16h28M5 20h28" stroke="#fff" stroke-width="2" />`);
    const orb = icon(38, 38, svg`
      <defs><radialGradient id="st" cx=".5" cy=".9" r=".9"><stop stop-color="#4fc8f5" /><stop offset=".5" stop-color="#1c5f94" /><stop offset="1" stop-color="#6a8ba3" /></radialGradient></defs>
      <circle cx="19" cy="18.500" r="18" fill="url(#st)" stroke="#5f7f95" />
      <path d="M11 9q4-2 8 0l-2 8q-4-2-8 0z" fill="#ee6a34" /><path d="M20 10q4 2 9 0l-2 8q-5 2-9 0z" fill="#8cc63f" />
      <path d="M9 19q4-2 8 0l-2 8q-4-2-8 0z" fill="#3fa4e8" /><path d="M18 20q4 2 8 0l-2 8q-4 2-8 0z" fill="#fbc92e" />
      <path d="M3 15a16.500 16.500 0 0 1 32 0q-16-6-32 0z" fill="#fff" opacity=".25" />`);
    const apps: [string, unknown, string][] = [
      ["Internet Explorer", ie, ""], ["Media Player", media, ""], ["VLC", vlc, ""], ["Eclipse", eclipse, ""],
      ["Excel", excel, "open"], ["Explorer", folder, "open many"], ["Chrome", chrome, ""], ["Reader", adobe, "open"],
    ];
    return html`
      <button class="start" aria-label="Start">${orb}</button>
      ${apps.map(([name, ic, cls]) => html`<button class="app ${cls}" aria-label=${name}>${ic}</button>`)}
      <div class="tray">
        <button aria-label="Show hidden icons">${icon(8, 5, svg`<path d="M0 5h8L4 0z" fill="#fff" />`)}</button>
        <div class="clock">6:55 PM<br />08-Sep-19</div>
        <button class="desk" aria-label="Show desktop"></button>
      </div>`;
  }
}

@customElement("app-root")
class AppRoot extends LitElement {
  static styles = css`
    :host { display: flex; flex-direction: column; height: 100vh; overflow: hidden; background: #bfdbff; font-family: "Open Sans", "Noto Sans", sans-serif; }
  `;
  render() {
    return html`<title-bar></title-bar><ribbon-tabs></ribbon-tabs><format-ribbon></format-ribbon><formula-bar></formula-bar>
      <work-sheet></work-sheet><sheet-tabs></sheet-tabs><status-bar></status-bar><task-bar></task-bar>`;
  }
}
